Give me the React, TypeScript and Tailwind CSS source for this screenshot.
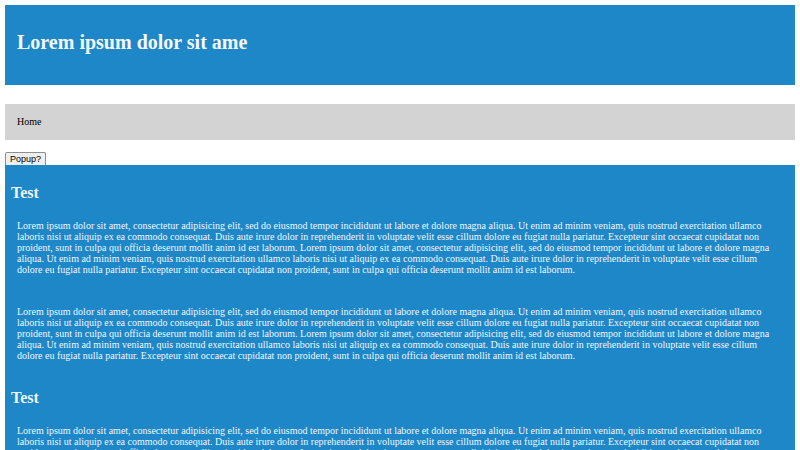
const lorem =
  "Lorem ipsum dolor sit amet, consectetur adipisicing elit, sed do eiusmod tempor incididunt ut labore et dolore magna aliqua. Ut enim ad minim veniam, quis nostrud exercitation ullamco laboris nisi ut aliquip ex ea commodo consequat. Duis aute irure dolor in reprehenderit in voluptate velit esse cillum dolore eu fugiat nulla pariatur. Excepteur sint occaecat cupidatat non proident, sunt in culpa qui officia deserunt mollit anim id est laborum.";

function Section() {
  return (
    <div className="pb-[9px]">
      <h2 className="px-[6px] pt-[19px] text-[16px] font-bold leading-[18px]">Test</h2>
      <p className="mt-[18px] px-[12px] text-[10px] leading-[11px]">
        {lorem} {lorem}
      </p>
      <p className="mt-[31px] px-[12px] text-[10px] leading-[11px]">
        {lorem} {lorem}
      </p>
    </div>
  );
}

export default function App() {
  return (
    <div className="h-[450px] overflow-hidden bg-white p-[5px] font-['Liberation_Serif',serif] text-black">
      <header className="flex h-[80px] items-center bg-[#1e87c8] px-[12px] pb-[6px]">
        <h1 className="text-[20px] font-bold text-[#f4f8fb]">Lorem ipsum dolor sit ame</h1>
      </header>
      <nav className="mt-[19px] flex h-[36px] items-center bg-[#d3d3d3] px-[12px] pb-[1px] text-[10px]">
        Home
      </nav>
      <button className="mt-[12px] block h-[13px] rounded-t-[2px] border border-b-0 border-[#8f8f8f] bg-[#efefef] px-[4px] font-['Liberation_Sans',sans-serif] text-[9px] leading-[11px] text-black">
        Popup?
      </button>
      <main className="bg-[#1e87c8] text-[#f1f6fa]">
        <Section />
        <Section />
      </main>
    </div>
  );
}
